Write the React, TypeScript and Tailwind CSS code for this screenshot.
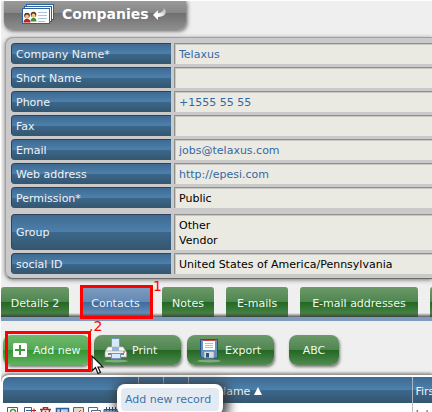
import type { ReactNode } from "react";

type Field = { label: string; lines: string[]; href?: string };

const mainFields: Field[] = [
  { label: "Company Name*", lines: ["Telaxus"], href: "#company" },
  { label: "Short Name", lines: [] },
  { label: "Phone", lines: ["+1555 55 55"], href: "tel:+15555555" },
  { label: "Fax", lines: [] },
  { label: "Email", lines: ["jobs@telaxus.com"], href: "mailto:jobs@telaxus.com" },
  { label: "Web address", lines: ["http://epesi.com"], href: "http://epesi.com" },
  { label: "Permission*", lines: ["Public"] },
];

const extraFields: Field[] = [
  { label: "Group", lines: ["Other", "Vendor"] },
  { label: "social ID", lines: ["United States of America/Pennsylvania"] },
];

const blueBar =
  "bg-[linear-gradient(to_bottom,#3f6a90_0%,#4c81ad_50%,#3c678b_50%,#34566f_100%)]";
const greenBar =
  "bg-[linear-gradient(to_bottom,#6c9a69_0%,#4f8450_50%,#216721_50%,#528a51_100%)]";

function FieldRow({ field }: { field: Field }) {
  return (
    <div className="flex min-h-[21px] gap-[3px]">
      <dt
        className={`flex w-40 shrink-0 items-center rounded-l-[4px] border-t border-l border-[#303f62] pl-1 text-[#eef3f8] ${blueBar}`}
      >
        {field.label}
      </dt>
      <dd className="flex flex-1 flex-col justify-center border-t border-l border-[#8f8f8c] bg-[#eaeae2] pl-1 leading-[15px] text-black shadow-[inset_1px_1px_0_#c8c8c4]">
        {field.lines.map((line) =>
          field.href ? (
            <a key={line} href={field.href} className="text-[#3468a4]">
              {line}
            </a>
          ) : (
            <span key={line}>{line}</span>
          ),
        )}
      </dd>
    </div>
  );
}

function Tab({ children, width }: { children: ReactNode; width: string }) {
  return (
    <button
      type="button"
      className={`h-[30px] shrink-0 rounded-t-[3px] pt-0.5 text-center whitespace-nowrap text-[#f2f7f2] ${greenBar} ${width}`}
    >
      {children}
    </button>
  );
}

function ContactsIcon() {
  return (
    <svg width="32" height="20" viewBox="0 0 32 20" aria-hidden="true">
      <g fill="#fff" stroke="#2d639c">
        <rect x="4.500" y=".5" width="27" height="15" />
        <rect x="2.500" y="2.500" width="27" height="15" />
        <rect x=".5" y="4.500" width="27" height="15" />
      </g>
      <circle cx="5" cy="11.500" r="2.800" fill="#5a3a18" />
      <circle cx="5" cy="12.500" r="1.900" fill="#efc58d" />
      <path d="M1.500 18.500c0-5 7-5 7 0z" fill="#b82222" />
      <circle cx="11.500" cy="10.500" r="2.800" fill="#5a3a18" />
      <circle cx="11.500" cy="11.500" r="1.900" fill="#efc58d" />
      <path d="M8.500 17.500c0-5 6-5 6 0z" fill="#4b8c2c" />
      <path d="M16 8.500h9M16 11.500h9M16 14.500h9M16 17.500h7" stroke="#a9c1da" />
    </svg>
  );
}

function BackArrow() {
  return (
    <svg width="14" height="12" viewBox="0 0 14 12" aria-hidden="true">
      <defs>
        <linearGradient id="arrowFade" x1="0" x2="1" y1="1" y2="0">
          <stop offset=".4" stopColor="#fff" />
          <stop offset="1" stopColor="#aaa" />
        </linearGradient>
      </defs>
      <path d="M0 7l5-5v3c3 0 5-1 6-5 4 4 1 9-6 9v3z" fill="url(#arrowFade)" />
    </svg>
  );
}

function PrinterIcon() {
  return (
    <svg width="25" height="26" viewBox="0 0 25 26" aria-hidden="true">
      <ellipse cx="12" cy="24" rx="12" ry="1.500" fill="#a8c7a5" opacity=".6" />
      <rect x="7.500" y="1.500" width="8" height="11" fill="#d8e8f6" stroke="#6f96bd" />
      <path d="M4 10h15l2.500 4h-20z" fill="#fafafa" stroke="#bdbdbd" strokeWidth=".6" />
      <path d="M8 10h7v4H8z" fill="#93b5d6" />
      <path d="M2 14h19q1.500 0 1.500 1.500V20H1v-4.500Q1 14 2 14z" fill="#f1f1f3" stroke="#aaa" strokeWidth=".6" />
      <path d="M4 17h16" stroke="#55585e" strokeWidth="1.500" />
      <rect x="7.500" y="16.500" width="9" height="5" fill="#dceaf7" stroke="#6f96bd" />
      <rect x="19" y="14.500" width="2" height="1" fill="#c33" />
    </svg>
  );
}

function FloppyIcon() {
  return (
    <svg width="25" height="26" viewBox="0 0 25 26" aria-hidden="true">
      <ellipse cx="12" cy="24" rx="12" ry="1.500" fill="#a8c7a5" opacity=".6" />
      <path d="M3.500 2.500h17v18.500h-15l-2-2z" fill="#6290bf" stroke="#23538a" />
      <rect x="6" y="3" width="12" height="10" fill="#fff" />
      <path d="M6 3.500h12" stroke="#c44" />
      <path d="M8 6.500h8M8 8.500h8M8 10.500h8" stroke="#bbb" />
      <rect x="7" y="14.500" width="10" height="6.500" fill="#dadada" stroke="#808a96" strokeWidth=".6" />
      <rect x="9" y="16" width="3" height="4.500" fill="#23538a" />
    </svg>
  );
}

function RowIcons() {
  return (
    <svg width="116" height="12" viewBox="0 0 116 12" fill="none" aria-hidden="true">
      <path d="M.5 12V.5h10V12" fill="#fff" stroke="#a33b2d" />
      <circle cx="6" cy="5" r="2.500" stroke="#4e9a4e" strokeWidth="1.500" />
      <path d="M17.500 12V.5h7V12M19 3.500h5M19 5.500h5" stroke="#2f5f96" />
      <path d="M25 3.500h4M27 1.500v4" stroke="#b32020" />
      <path d="M33 2.500h11M36.500 2V.5h4V2M34.500 3l1 9M42.500 3l-1 9M38.500 4v8" stroke="#a52a2a" strokeWidth="1.500" />
      <path d="M49.500 1.500h4v10h-4zM53.500 1.500h8V12" fill="#b9cfe6" stroke="#2a6099" strokeWidth="1.500" />
      <path d="M66.500 12V.5h10V12" fill="#dcdcd2" stroke="#496a8b" />
      <path d="M74 3l-3 3 1 2" stroke="#a34b2d" />
      <path d="M81.500 9V.5h9V3M84.500 12V3.500h9V12M86 6.500h6" stroke="#4d6a86" />
      <path d="M97 2.500h14V12H97z" fill="#7ca6cf" stroke="#2a5b8f" />
      <path d="M99.500 0v4M102.500 0v4M105.500 0v4M108.500 0v4" stroke="#234a76" />
    </svg>
  );
}

function Cursor() {
  return (
    <svg width="13" height="20" viewBox="0 0 13 20" className="absolute top-[34px] left-[90px] z-20" aria-hidden="true">
      <path d="M1 1v15l3.500-3.500L7 18.500l2.500-1L7 12h5z" fill="#fff" stroke="#111" strokeWidth="1.200" />
    </svg>
  );
}

const toolButton =
  "flex h-[30px] shrink-0 items-center rounded-lg text-[#f2f7f2] shadow-[1px_2px_3px_#777]";
const headCell = "border-r border-[#aab7c2] font-normal";

export default function App() {
  return (
    <main className="h-screen overflow-hidden border-t border-l border-white bg-[#efefef] font-['DejaVu_Sans','Noto_Sans',sans-serif] text-[11px] leading-[15px]">
      <header className="flex pl-[3px]">
        <div className="flex h-[29px] w-[182px] items-center rounded-b-lg bg-[linear-gradient(to_bottom,#999_0%,#868686_43%,#707070_43%,#8e8e8e_100%)] pb-1 pl-[18px] shadow-[1px_1px_4px_#555]">
          <ContactsIcon />
          <h1 className="ml-2 text-sm font-bold text-white">Companies</h1>
          <button type="button" aria-label="Back" className="ml-1">
            <BackArrow />
          </button>
        </div>
      </header>

      <section className="mt-[7px] ml-1 rounded-l-lg border border-r-0 border-[#a0a0a0] border-b-[#6c6c6c] bg-[#cacaca] pt-[5px] pb-1 pl-[5px] shadow-[0_1px_4px_#777]">
        <dl className="flex flex-col gap-[3px]">
          {mainFields.map((f) => (
            <FieldRow key={f.label} field={f} />
          ))}
        </dl>
        <dl className="mt-1.5 flex flex-col gap-[3px]">
          <div className="grid h-9">
            <FieldRow field={extraFields[0]} />
          </div>
          <FieldRow field={extraFields[1]} />
        </dl>
      </section>

      <nav className="relative mt-2 flex gap-3 border-b-4 border-[#7d9bbc]">
        <Tab width="w-[68px]">Details 2</Tab>
        <button
          type="button"
          className="h-[30px] w-[69px] shrink-0 bg-[linear-gradient(to_bottom,#7d9cc0_0%,#6589b3_50%,#3c6a9f_50%,#7594b8_100%)] pt-0.5 text-center text-[#eef3f8]"
        >
          Contacts
        </button>
        <Tab width="w-[52px]">Notes</Tab>
        <Tab width="w-[62px]">E-mails</Tab>
        <Tab width="w-[118px]">E-mail addresses</Tab>
        <Tab width="w-[68px]">Notes 2</Tab>
        <div className="pointer-events-none absolute inset-x-0 bottom-0 h-1 bg-linear-to-b from-transparent to-[#333]/80" />
        <div className="pointer-events-none absolute -top-0.5 left-[79px] h-[34px] w-[73px] border-3 border-[#f00]" />
        <span className="absolute -top-2 left-[152px] text-sm leading-[15px] text-[#f00]">1</span>
      </nav>

      <div className="relative flex pt-3.5 pb-[9px] pl-0.5">
        <button
          type="button"
          className={`${toolButton} w-[87px] gap-1.5 bg-[linear-gradient(to_bottom,#70b96e_0%,#54a853_50%,#329632_50%,#62b260_100%)] pl-2.5`}
        >
          <svg width="14" height="14" viewBox="0 0 14 14" aria-hidden="true">
            <rect width="14" height="14" rx="1.500" fill="#fff" />
            <path d="M7 2v10M2 7h10" stroke="#3d9b3d" strokeWidth="2" />
          </svg>
          Add new
        </button>
        <button type="button" className={`${toolButton} ${greenBar} ml-1 w-[87px] gap-[3px] pl-2.5`}>
          <PrinterIcon />
          Print
        </button>
        <button type="button" className={`${toolButton} ${greenBar} ml-1.5 w-[87px] gap-[3px] pl-2.5`}>
          <FloppyIcon />
          Export
        </button>
        <button type="button" className={`${toolButton} ${greenBar} ml-[15px] w-[50px] justify-center`}>
          ABC
        </button>
        <div className="pointer-events-none absolute top-2.5 left-1 z-10 h-[41px] w-[86px] border-3 border-[#f00]" />
        <span className="absolute -top-0.5 left-[88px] z-20 text-sm leading-[15px] text-[#f00]">.2</span>
        <Cursor />
      </div>

      <section className="relative rounded-tl-lg border-t border-[#999] bg-white pt-0.5 pl-0.5 shadow-[0_-1px_3px_#888]">
        <table className="w-full table-fixed border-collapse">
          <thead>
            <tr className="h-[26px] text-left text-[#eef3f8]">
              <th aria-label="Actions" className={`${headCell} ${blueBar} w-[135px] rounded-tl-md`} />
              <th aria-label="Favourite" className={`${headCell} ${blueBar} w-[25px]`} />
              <th aria-label="Watch" className={`${headCell} ${blueBar} w-[25px]`} />
              <th className={`${headCell} ${blueBar} w-56 pt-0.5 pl-[3px]`}>
                <span className="flex items-center gap-1">
                  Last Name
                  <svg width="8" height="8" viewBox="0 0 8 8" aria-hidden="true">
                    <path d="M4 0l4 8H0z" fill="#fff" />
                  </svg>
                </span>
              </th>
              <th className={`${blueBar} overflow-hidden pt-0.5 pl-[3px] font-normal whitespace-nowrap`}>
                First Name
              </th>
            </tr>
          </thead>
          <tbody>
            <tr>
              <td className="h-6 pt-1 pl-1 align-top">
                <RowIcons />
              </td>
              <td />
              <td />
              <td />
              <td className="border-l border-[#bbb] pt-1 pl-[3px] align-top">
                <a href="#contact" className="text-[#3468a4]">
                  John
                </a>
              </td>
            </tr>
          </tbody>
        </table>
        <div
          role="tooltip"
          className="absolute top-[9px] left-[116px] rounded-lg bg-white p-1 text-[#3f73ac] shadow-[2px_2px_12px_3px_#333]"
        >
          <div className="rounded-sm bg-[#e4eaf2] py-1 pr-2 pl-1">Add new record</div>
        </div>
      </section>
    </main>
  );
}
